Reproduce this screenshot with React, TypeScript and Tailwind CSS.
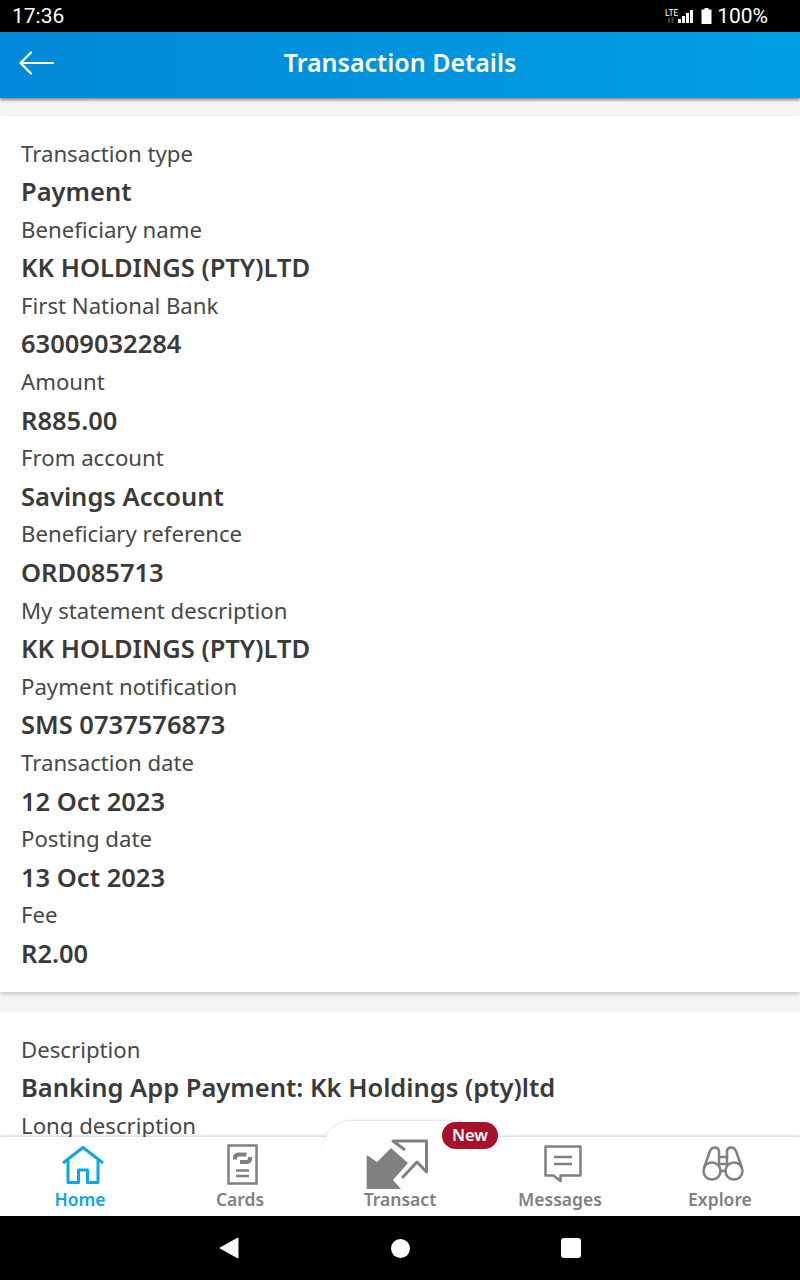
import { ReactNode } from "react";

const details = [
  ["Transaction type", "Payment"],
  ["Beneficiary name", "KK HOLDINGS (PTY)LTD"],
  ["First National Bank", "63009032284"],
  ["Amount", "R885.00"],
  ["From account", "Savings Account"],
  ["Beneficiary reference", "ORD085713"],
  ["My statement description", "KK HOLDINGS (PTY)LTD"],
  ["Payment notification", "SMS 0737576873"],
  ["Transaction date", "12 Oct 2023"],
  ["Posting date", "13 Oct 2023"],
  ["Fee", "R2.00"],
];

function Row({ label, value }: { label: string; value?: string }) {
  return (
    <>
      <div className="h-[38.1px] pt-[0.5px] leading-[38.1px] text-[22.2px] text-[#484848] whitespace-nowrap">{label}</div>
      {value && <div className="h-[38.1px] leading-[38.1px] text-[25.5px] font-semibold text-[#3a3a3a] whitespace-nowrap">{value}</div>}
    </>
  );
}

function NavItem({ icon, label, active }: { icon: ReactNode; label: string; active?: boolean }) {
  return (
    <div className={`flex-1 flex flex-col items-center h-full ${active ? "text-[#0ea5e4]" : "text-[#808080]"}`}>
      <div className="h-[50px] flex items-start justify-center">{icon}</div>
      <div className="text-[17.5px] leading-[24px] font-semibold">{label}</div>
    </div>
  );
}

const HomeIcon = (
  <svg className="mt-[9px] ml-[5px]" width="42" height="38" viewBox="0 0 42 38" fill="none" stroke="currentColor" strokeWidth="3" strokeLinejoin="round">
    <path d="M1 17 21 1.500 41 17" />
    <path d="M6 13.500V36.500h10.500V24h9V36.500H36V13.500" />
  </svg>
);

const CardsIcon = (
  <svg className="mt-[7px] ml-[5px]" width="32" height="41" viewBox="0 0 32 41" fill="none" stroke="currentColor">
    <rect x="1.500" y="1.500" width="28" height="38" strokeWidth="2.500" />
    <path d="M8 15.500v-1.500q0-3.500 4-3.500h7.500M23 13v1.500q0 3.500-4 3.500h-6" strokeWidth="4" />
    <path d="M9 26.500h13M9 32h13" strokeWidth="2.500" />
  </svg>
);

const TransactIcon = (
  <svg className="mt-[2px] mr-[6px]" width="62" height="50" viewBox="0 0 62 50" fill="#808080">
    <path d="M.7 16 11 23 25 9l17 15-15 17 8 9H.7z" />
    <path d="M39 11 27 2H60.500V33L51 23 36 39" fill="none" stroke="#808080" strokeWidth="3" strokeLinejoin="round" />
  </svg>
);

const MessagesIcon = (
  <svg className="mt-[8px] ml-[5px]" width="38" height="38" viewBox="0 0 38 38" fill="none" stroke="currentColor" strokeWidth="2.500" strokeLinejoin="round">
    <path d="M1.500 1.500h35v29H16.500v5.500l-7-5.500H1.500z" />
    <path d="M10 12h18M10 19h18" />
  </svg>
);

const ExploreIcon = (
  <svg className="mt-[9px] ml-[6px]" width="42" height="36" viewBox="0 0 42 36" fill="none" stroke="currentColor" strokeWidth="2.500">
    <circle cx="10" cy="25" r="8.500" />
    <circle cx="32" cy="25" r="8.500" />
    <path d="M2 22 8 5q1.500-3.500 5-3.500T17 5v15M40 22 34 5q-1.500-3.500-5-3.500T25 5v15M17 11h8M17 18h8M18 25h6" />
  </svg>
);

export default function App() {
  return (
    <div className="w-[800px] h-[1280px] flex flex-col overflow-hidden bg-[#f4f4f4] font-['Noto_Sans',sans-serif]">
      {/* Status bar */}
      <div className="h-8 shrink-0 bg-black text-white flex items-center justify-between pl-3 pr-8 pt-[2px] font-['Roboto',sans-serif] text-[21px]">
        <span>17:36</span>
        <div className="flex items-center gap-[5px]">
          <svg className="mr-[3px] -mt-[2px]" width="28" height="15" viewBox="0 0 28 15" fill="white">
            <text x="0" y="6.500" fontSize="8.500" fontFamily="Roboto, sans-serif">LTE</text>
            <rect x="3" y="9" width="2" height="5" fill="#444444" />
            <rect x="6.500" y="8" width="2" height="6" fill="#444444" />
            <rect x="13" y="10" width="3" height="4" />
            <rect x="17" y="7" width="3" height="7" />
            <rect x="21" y="4" width="3" height="10" />
            <rect x="25" y="1" width="3" height="13" />
          </svg>
          <svg className="-mt-[2px]" width="11" height="16" viewBox="0 0 11 16" fill="white">
            <path d="M3.500 0h4v1.500H10.500V16H.5V1.500h3z" />
          </svg>
          <span>100%</span>
        </div>
      </div>

      {/* Header */}
      <div className="h-[66px] shrink-0 relative z-10 bg-gradient-to-r from-[#0288d8] to-[#009fe3] shadow-[0_2px_3px_rgba(0,0,0,0.45)] flex items-center justify-center text-white">
        <svg className="absolute left-[19px] top-[19px]" width="36" height="24" viewBox="0 0 36 24" fill="none" stroke="white" strokeWidth="2.200" strokeLinecap="round" strokeLinejoin="round">
          <path d="M12 1.500 1.500 12 12 22.500M1.500 12H34" />
        </svg>
        <span className="text-[25px] font-semibold -mt-1">Transaction Details</span>
      </div>

      {/* Content */}
      <div className="flex-1 min-h-0 overflow-hidden pt-[18px]">
        <div className="bg-white h-[876px] pt-[18px] pl-[21px] shadow-[0_2px_4px_rgba(0,0,0,0.18)]">
          {details.map(([label, value], i) => (
            <Row key={i} label={label} value={value} />
          ))}
        </div>
        <div className="bg-white mt-5 pt-[18px] pl-[21px] h-[300px]">
          <Row label="Description" value="Banking App Payment: Kk Holdings (pty)ltd" />
          <Row label="Long description" />
        </div>
      </div>

      {/* Bottom nav */}
      <div className="h-[79px] shrink-0 relative z-10 bg-white shadow-[0_-1px_3px_rgba(0,0,0,0.2)] flex">
        <div className="absolute left-[322px] top-[-16px] w-[156px] h-[30px] bg-white rounded-t-[30px] shadow-[0_-1px_2px_rgba(0,0,0,0.12)]" />
        <div className="absolute left-[442px] top-[-15px] w-14 h-[27px] rounded-full bg-[#a6112b] text-white text-[16.5px] leading-[26px] font-semibold text-center z-10">New</div>
        <div className="relative flex w-full h-full">
          <NavItem icon={HomeIcon} label="Home" active />
          <NavItem icon={CardsIcon} label="Cards" />
          <NavItem icon={TransactIcon} label="Transact" />
          <NavItem icon={MessagesIcon} label="Messages" />
          <NavItem icon={ExploreIcon} label="Explore" />
        </div>
      </div>

      {/* Android nav */}
      <div className="h-16 shrink-0 bg-black flex items-center pl-[219px]">
        <div className="flex items-center gap-[151.5px]">
          <svg width="20" height="22" viewBox="0 0 20 22" fill="white"><path d="M19 1v20L1 11z" stroke="white" strokeLinejoin="round" /></svg>
          <div className="w-[19px] h-[19px] rounded-full bg-white" />
          <div className="w-5 h-5 rounded-[3px] bg-white" />
        </div>
      </div>
    </div>
  );
}
